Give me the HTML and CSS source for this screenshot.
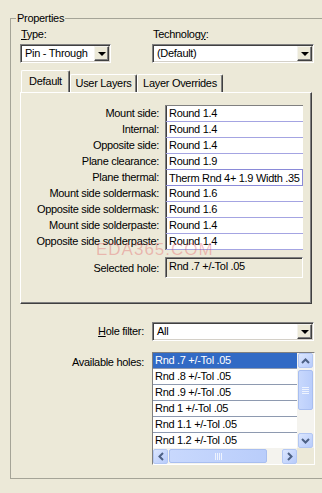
FILE: index.html
```html
<html>
    <head>
        <title>Properties</title>
        <link rel="stylesheet" href="styles.css">
    </head>
    <body>
        <fieldset class="group">
            <legend>Properties</legend>
            <div class="top-row">
                <div class="field type-field">
                    <div class="cap"><u>T</u>ype:</div>
                    <div class="combo">
                        <span class="combo-text">Pin - Through</span>
                        <span class="drop-btn"><i class="tri"></i></span>
                    </div>
                </div>
                <div class="field tech-field">
                    <div class="cap">Technolog<u>y</u>:</div>
                    <div class="combo">
                        <span class="combo-text">(Default)</span>
                        <span class="drop-btn"><i class="tri"></i></span>
                    </div>
                </div>
            </div>

            <div class="tab-strip">
                <span class="tab active">Default</span>
                <span class="tab">User Layers</span>
                <span class="tab">Layer Overrides</span>
            </div>
            <div class="tab-panel">
                <div class="pad-grid">
                    <div class="pad-labels">
                        <div>Mount side:</div>
                        <div>Internal:</div>
                        <div>Opposite side:</div>
                        <div>Plane clearance:</div>
                        <div>Plane thermal:</div>
                        <div>Mount side soldermask:</div>
                        <div>Opposite side soldermask:</div>
                        <div>Mount side solderpaste:</div>
                        <div>Opposite side solderpaste:</div>
                    </div>
                    <div class="pad-values">
                        <div>Round 1.4</div>
                        <div>Round 1.4</div>
                        <div>Round 1.4</div>
                        <div>Round 1.9</div>
                        <div class="focus">Therm Rnd 4+ 1.9 Width .35</div>
                        <div>Round 1.6</div>
                        <div>Round 1.6</div>
                        <div>Round 1.4</div>
                        <div>Round 1.4</div>
                    </div>
                </div>
                <div class="hole-row">
                    <div class="hole-label">Selected hole:</div>
                    <div class="hole-box">Rnd .7 +/-Tol .05</div>
                </div>
                <div class="watermark">EDA365.COM</div>
            </div>

            <div class="form-row filter-row">
                <div class="row-label"><u>H</u>ole filter:</div>
                <div class="combo wide">
                    <span class="combo-text">All</span>
                    <span class="drop-btn"><i class="tri"></i></span>
                </div>
            </div>

            <div class="form-row holes-row">
                <div class="row-label top">Available holes:</div>
                <div class="listbox">
                    <div class="list-items">
                        <div class="item selected">Rnd .7 +/-Tol .05</div>
                        <div class="item">Rnd .8 +/-Tol .05</div>
                        <div class="item">Rnd .9 +/-Tol .05</div>
                        <div class="item">Rnd 1 +/-Tol .05</div>
                        <div class="item">Rnd 1.1 +/-Tol .05</div>
                        <div class="item">Rnd 1.2 +/-Tol .05</div>
                    </div>
                    <div class="vscroll">
                        <span class="sb-btn">
                            <svg width="9" height="6" viewBox="0 0 9 6"><path d="M1 5 L4.5 1.5 L8 5" fill="none" stroke="#4d6185" stroke-width="2"/></svg>
                        </span>
                        <span class="sb-thumb v"><i></i><i></i><i></i><i></i></span>
                        <span class="sb-track"></span>
                        <span class="sb-btn">
                            <svg width="9" height="6" viewBox="0 0 9 6"><path d="M1 1 L4.5 4.5 L8 1" fill="none" stroke="#4d6185" stroke-width="2"/></svg>
                        </span>
                    </div>
                    <div class="hscroll">
                        <span class="sb-btn">
                            <svg width="6" height="9" viewBox="0 0 6 9"><path d="M5 1 L1.5 4.5 L5 8" fill="none" stroke="#4d6185" stroke-width="2"/></svg>
                        </span>
                        <span class="sb-thumb h"><i></i><i></i><i></i><i></i></span>
                        <span class="sb-track"></span>
                        <span class="sb-btn">
                            <svg width="6" height="9" viewBox="0 0 6 9"><path d="M1 1 L4.5 4.5 L1 8" fill="none" stroke="#4d6185" stroke-width="2"/></svg>
                        </span>
                    </div>
                    <div class="corner"></div>
                </div>
            </div>
        </fieldset>
    </body>
</html>
```
FILE: styles.css
```css
*{
    margin:0;
    padding:0;
    box-sizing:border-box;
}
body{
    width:322px;
    height:493px;
    overflow:hidden;
    background:#ece9d8;
    font-family:"Liberation Sans", Arial, sans-serif;
    font-size:11px;
    letter-spacing:-0.3px;
    color:#000;
}
u{
    text-decoration:underline;
    text-underline-offset:1px;
}

/* group box, its right edge lies outside the window */
.group{
    margin:12px 0 0 10px;
    width:312px;
    border:1px solid #a5a497;
    border-right:none;
    padding:2px 0 13px 9px;
}
.group legend{
    margin-left:-4px;
    padding:0 1px;
    line-height:13px;
}

/* type / technology */
.top-row{
    display:flex;
}
.type-field{
    width:91px;
}
.tech-field{
    margin-left:41px;
    width:162px;
}
.cap{
    line-height:14px;
    margin-bottom:3px;
    padding-left:1px;
}
.combo{
    display:flex;
    align-items:center;
    height:19px;
    background:#fff;
    border:1px solid;
    border-color:#808080 #fff #fff #808080;
    box-shadow:inset 1px 1px #404040, inset -1px -1px #d4d0c8;
    padding:1px 1px 1px 2px;
}
.combo-text{
    flex:1;
    padding-left:2px;
    line-height:15px;
    white-space:nowrap;
}
.drop-btn{
    display:flex;
    align-items:center;
    justify-content:center;
    width:15px;
    height:15px;
    background:#ece9d8;
    border:1px solid;
    border-color:#f4f3ee #404040 #404040 #f4f3ee;
    box-shadow:inset -1px -1px #808080;
}
.tri{
    width:0;
    height:0;
    border-left:4px solid transparent;
    border-right:4px solid transparent;
    border-top:4px solid #000;
    margin-top:1px;
}

/* tabs */
.tab-strip{
    display:flex;
    align-items:flex-end;
    height:22px;
    margin-top:7px;
    padding-left:1px;
}
.tab{
    height:18px;
    line-height:17px;
    text-align:center;
    border:1px solid;
    border-bottom:none;
    border-color:#fff #404040 #fff #fff;
    box-shadow:inset -1px 0 #808080;
    border-radius:2px 2px 0 0;
}
.tab:nth-child(1){
    width:49px;
}
.tab:nth-child(2){
    width:67px;
}
.tab:nth-child(3){
    width:86px;
}
.tab.active{
    position:relative;
    height:23px;
    margin-bottom:-1px;
    line-height:20px;
    background:#ece9d8;
}
.tab-panel{
    position:relative;
    width:292px;
    height:212px;
    border:1px solid;
    border-color:#fff #404040 #404040 #fff;
    box-shadow:inset -1px -1px #808080;
    padding:12px 7px 0 0;
}

/* pad stack grid */
.pad-grid{
    display:flex;
}
.pad-labels{
    width:139px;
    padding-top:1px;
    text-align:right;
    padding-right:1px;
}
.pad-labels div{
    height:16px;
    line-height:15px;
    white-space:nowrap;
}
.pad-values{
    margin-left:5px;
    width:138px;
    background:#fff;
    border-top:1px solid #808080;
    border-left:1px solid #808080;
    box-shadow:inset 1px 0 #404040;
}
.pad-values div{
    height:16px;
    line-height:15px;
    padding-left:3px;
    border-bottom:1px solid #a4a4e2;
    white-space:nowrap;
    overflow:hidden;
}
.pad-values div.focus{
    border:1px solid #8a8ad8;
    border-left:none;
    margin-top:-1px;
    height:17px;
    line-height:16px;
}

.hole-row{
    display:flex;
    align-items:center;
    margin-top:7px;
}
.hole-label{
    width:139px;
    text-align:right;
    padding-right:1px;
}
.hole-box{
    margin-left:5px;
    width:138px;
    height:21px;
    line-height:17px;
    padding-left:3px;
    border:1px solid;
    border-color:#808080 #fff #fff #808080;
    box-shadow:inset 1px 1px #404040;
}
.watermark{
    position:absolute;
    left:75px;
    top:147px;
    font-size:17px;
    letter-spacing:1px;
    color:rgba(226,70,80,0.32);
}

/* lower form */
.form-row{
    display:flex;
}
.row-label{
    width:132px;
    padding-right:8px;
    text-align:right;
    line-height:19px;
}
.row-label.top{
    line-height:14px;
    padding-top:3px;
}
.filter-row{
    margin-top:18px;
}
.combo.wide{
    width:162px;
}
.holes-row{
    margin-top:11px;
}

/* list box */
.listbox{
    display:grid;
    grid-template-columns:144px 17px;
    grid-template-rows:95px 16px;
    width:163px;
    height:113px;
    border:1px solid;
    border-color:#808080 #fff #fff #808080;
    background:#fff;
}
.list-items{
    overflow:hidden;
}
.item{
    height:16px;
    line-height:15px;
    padding-left:2px;
    border-bottom:1px solid #8e9ab0;
    white-space:nowrap;
}
.item.selected{
    background:#316ac5;
    color:#fff;
}
.vscroll,
.hscroll{
    display:flex;
    background:#f4f3ee;
}
.vscroll{
    flex-direction:column;
    padding:0 1px;
}
.hscroll{
    padding:1px 0;
}
.sb-btn{
    display:flex;
    align-items:center;
    justify-content:center;
    width:15px;
    height:15px;
    flex:none;
    background:linear-gradient(135deg, #dbe6fe, #b7cbfb);
    border:1px solid #b3c7f3;
    border-radius:2px;
}
.sb-track{
    flex:1;
}
.sb-thumb{
    display:flex;
    align-items:center;
    justify-content:center;
    gap:1px;
    background:linear-gradient(90deg, #c8d8fd, #b9cdfb);
    border:1px solid #a8bef0;
    border-radius:2px;
    flex:none;
}
.sb-thumb.v{
    flex-direction:column;
    width:15px;
    height:40px;
    margin-top:2px;
}
.sb-thumb.v i{
    width:7px;
    height:1px;
    background:#eef3fe;
}
.sb-thumb.h{
    width:98px;
    height:14px;
    margin-left:1px;
}
.sb-thumb.h i{
    width:1px;
    height:7px;
    background:#eef3fe;
}
.corner{
    background:#ece9d8;
}
```
